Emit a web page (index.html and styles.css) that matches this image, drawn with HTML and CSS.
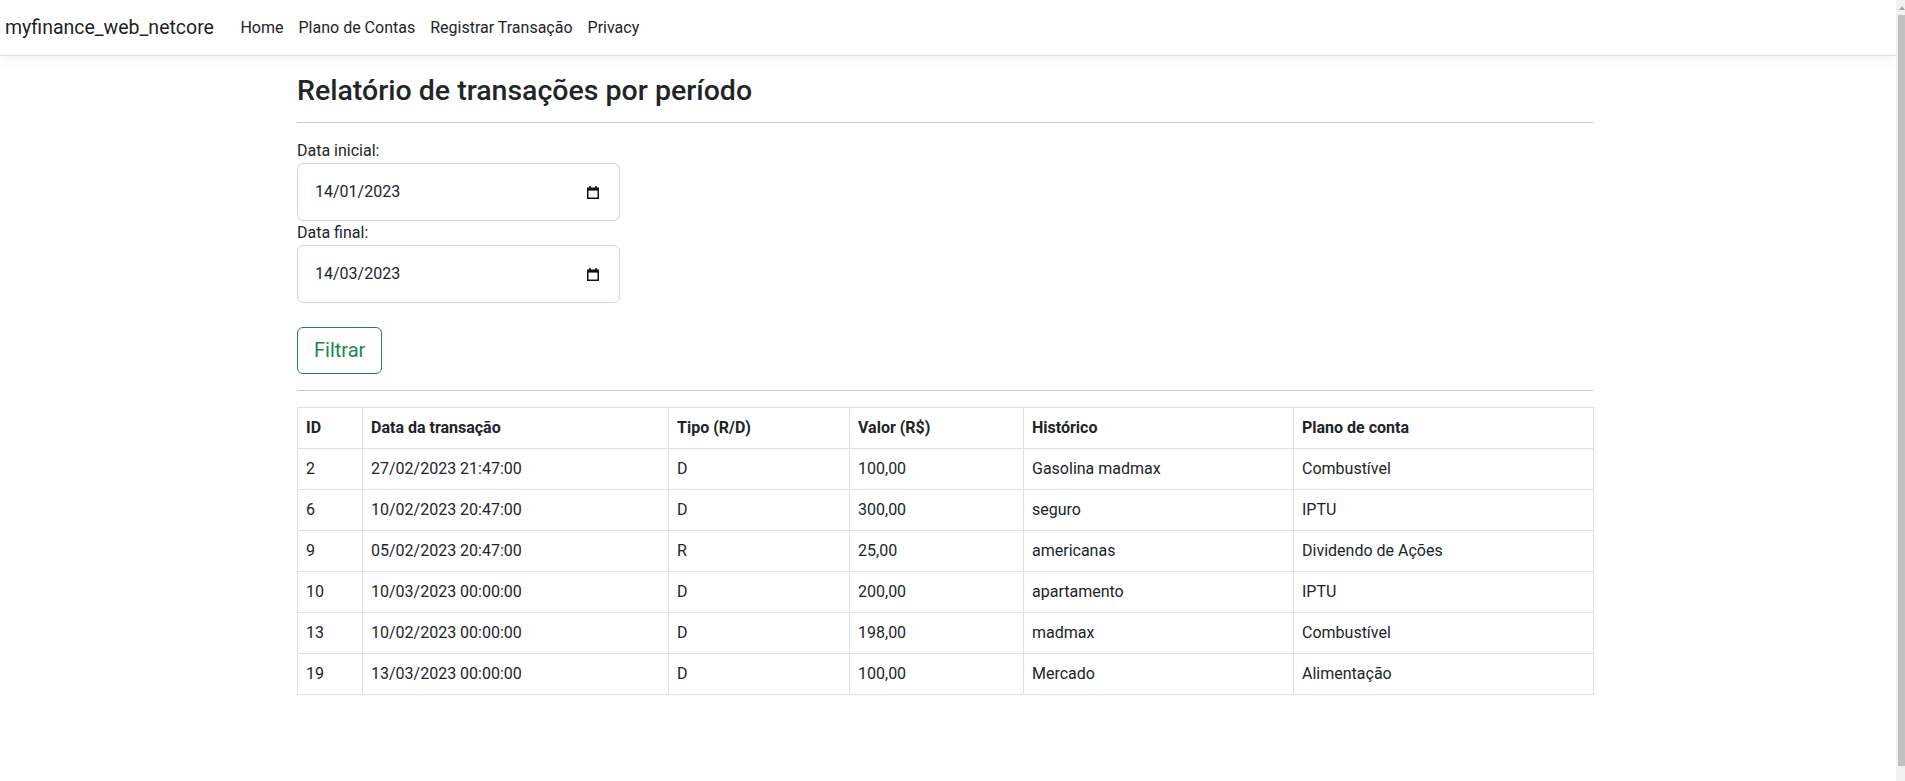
FILE: index.html
```html
<!DOCTYPE html>
<html lang="pt-BR">
<head>
<meta charset="utf-8">
<title>Relatório - myfinance_web_netcore</title>
<link rel="stylesheet" href="styles.css">
</head>
<body>
<div class="page">
  <header class="navbar">
    <a class="brand" href="#">myfinance_web_netcore</a>
    <nav class="nav">
      <a class="nav-link" href="#">Home</a>
      <a class="nav-link" href="#">Plano de Contas</a>
      <a class="nav-link" href="#">Registrar Transação</a>
      <a class="nav-link" href="#">Privacy</a>
    </nav>
  </header>
  <main class="container">
    <h3 class="title">Relatório de transações por período</h3>
    <hr class="rule">
    <form class="filter">
      <label class="field-label">Data inicial:</label>
      <div class="date-input"><span class="date-value">14/01/2023</span><svg class="cal" width="12" height="13" viewBox="0 0 12 13"><path d="M3 0v2M9 0v2" stroke="#111" stroke-width="1.6"/><rect x="0.75" y="2.25" width="10.5" height="10" fill="none" stroke="#111" stroke-width="1.5"/><rect x="0.75" y="2" width="10.5" height="2.6" fill="#111"/></svg></div>
      <label class="field-label">Data final:</label>
      <div class="date-input"><span class="date-value">14/03/2023</span><svg class="cal" width="12" height="13" viewBox="0 0 12 13"><path d="M3 0v2M9 0v2" stroke="#111" stroke-width="1.6"/><rect x="0.75" y="2.25" width="10.5" height="10" fill="none" stroke="#111" stroke-width="1.5"/><rect x="0.75" y="2" width="10.5" height="2.6" fill="#111"/></svg></div>
      <button class="btn-filter" type="button">Filtrar</button>
    </form>
    <hr class="rule rule-table">
    <table class="report">
      <colgroup>
        <col class="c-id"><col class="c-date"><col class="c-tipo"><col class="c-valor"><col class="c-hist"><col class="c-plano">
      </colgroup>
      <thead>
        <tr><th>ID</th><th>Data da transação</th><th>Tipo (R/D)</th><th>Valor (R$)</th><th>Histórico</th><th>Plano de conta</th></tr>
      </thead>
      <tbody>
        <tr><td>2</td><td>27/02/2023 21:47:00</td><td>D</td><td>100,00</td><td>Gasolina madmax</td><td>Combustível</td></tr>
        <tr><td>6</td><td>10/02/2023 20:47:00</td><td>D</td><td>300,00</td><td>seguro</td><td>IPTU</td></tr>
        <tr><td>9</td><td>05/02/2023 20:47:00</td><td>R</td><td>25,00</td><td>americanas</td><td>Dividendo de Ações</td></tr>
        <tr><td>10</td><td>10/03/2023 00:00:00</td><td>D</td><td>200,00</td><td>apartamento</td><td>IPTU</td></tr>
        <tr><td>13</td><td>10/02/2023 00:00:00</td><td>D</td><td>198,00</td><td>madmax</td><td>Combustível</td></tr>
        <tr><td>19</td><td>13/03/2023 00:00:00</td><td>D</td><td>100,00</td><td>Mercado</td><td>Alimentação</td></tr>
      </tbody>
    </table>
  </main>
</div>
<div class="scrollbar">
  <div class="sb-arrow"><span class="tri-up"></span></div>
  <div class="sb-thumb"></div>
  <div class="sb-arrow"></div>
</div>
</body>
</html>
```
FILE: styles.css
```css
* { box-sizing: border-box; }
html, body { margin: 0; padding: 0; }
body {
  display: flex;
  min-height: 100vh;
  overflow: hidden;
  font-family: Roboto, "Liberation Sans", Arial, sans-serif;
  font-size: 16px;
  line-height: 24px;
  color: #212529;
  background: #fff;
}
.page { flex: 1; padding-right: 6px; min-width: 0; }
.navbar {
  height: 56px;
  margin-right: -6px;
  border-bottom: 1px solid #dee2e6;
  box-shadow: 0 4px 12px rgba(0,0,0,.05);
  display: flex;
  align-items: center;
  padding-left: 5px;
}
.brand {
  font-size: 19.5px;
  line-height: 30px;
  color: rgba(0,0,0,.9);
  text-decoration: none;
  margin-right: 19px;
}
.nav { display: flex; }
.nav-link {
  color: #212529;
  text-decoration: none;
  padding: 0 7.5px;
  font-size: 16px;
}
.container { width: 1296px; margin: 0 auto; }
.title {
  font-size: 28.5px;
  line-height: 34px;
  font-weight: 500;
  margin: 18px 0 0;
}
.rule {
  border: 0;
  border-top: 1px solid #c8c9ca;
  margin: 14px 0 16px;
}
.filter { display: flex; flex-direction: column; align-items: flex-start; }
.field-label { display: block; }
.date-input {
  width: 323px;
  height: 58px;
  border: 1px solid #ced4da;
  border-radius: 6px;
  display: flex;
  align-items: center;
  justify-content: space-between;
  padding: 0 20px 0 17px;
}
.date-value { font-size: 16px; }
.cal { display: block; }
.btn-filter {
  margin-top: 24px;
  font-family: inherit;
  font-size: 20px;
  line-height: 29px;
  padding: 8px 16px;
  color: #198754;
  background: #fff;
  border: 1px solid #198754;
  border-radius: 6px;
}
.rule-table { margin-top: 16px; }
.report {
  width: 1296px;
  table-layout: fixed;
  border-collapse: collapse;
}
.c-id { width: 65px; }
.c-date { width: 306px; }
.c-tipo { width: 181px; }
.c-valor { width: 174px; }
.c-hist { width: 270px; }
.c-plano { width: 300px; }
.report th, .report td {
  border: 1px solid #dee2e6;
  padding: 8px;
  text-align: left;
  font-size: 16px;
  line-height: 24px;
}
.report th { font-weight: 700; }
.scrollbar {
  width: 9px;
  height: 100vh;
  flex: none;
  background: #f1f1f1;
  display: flex;
  flex-direction: column;
  align-items: flex-end;
}
.sb-arrow { height: 15px; width: 9px; display: flex; justify-content: flex-end; align-items: center; }
.tri-up {
  width: 0; height: 0;
  border-left: 3px solid transparent;
  border-right: 3px solid transparent;
  border-bottom: 4px solid #a3a3a3;
}
.sb-thumb { flex: 1; width: 7px; background: #c1c1c1; }
```
